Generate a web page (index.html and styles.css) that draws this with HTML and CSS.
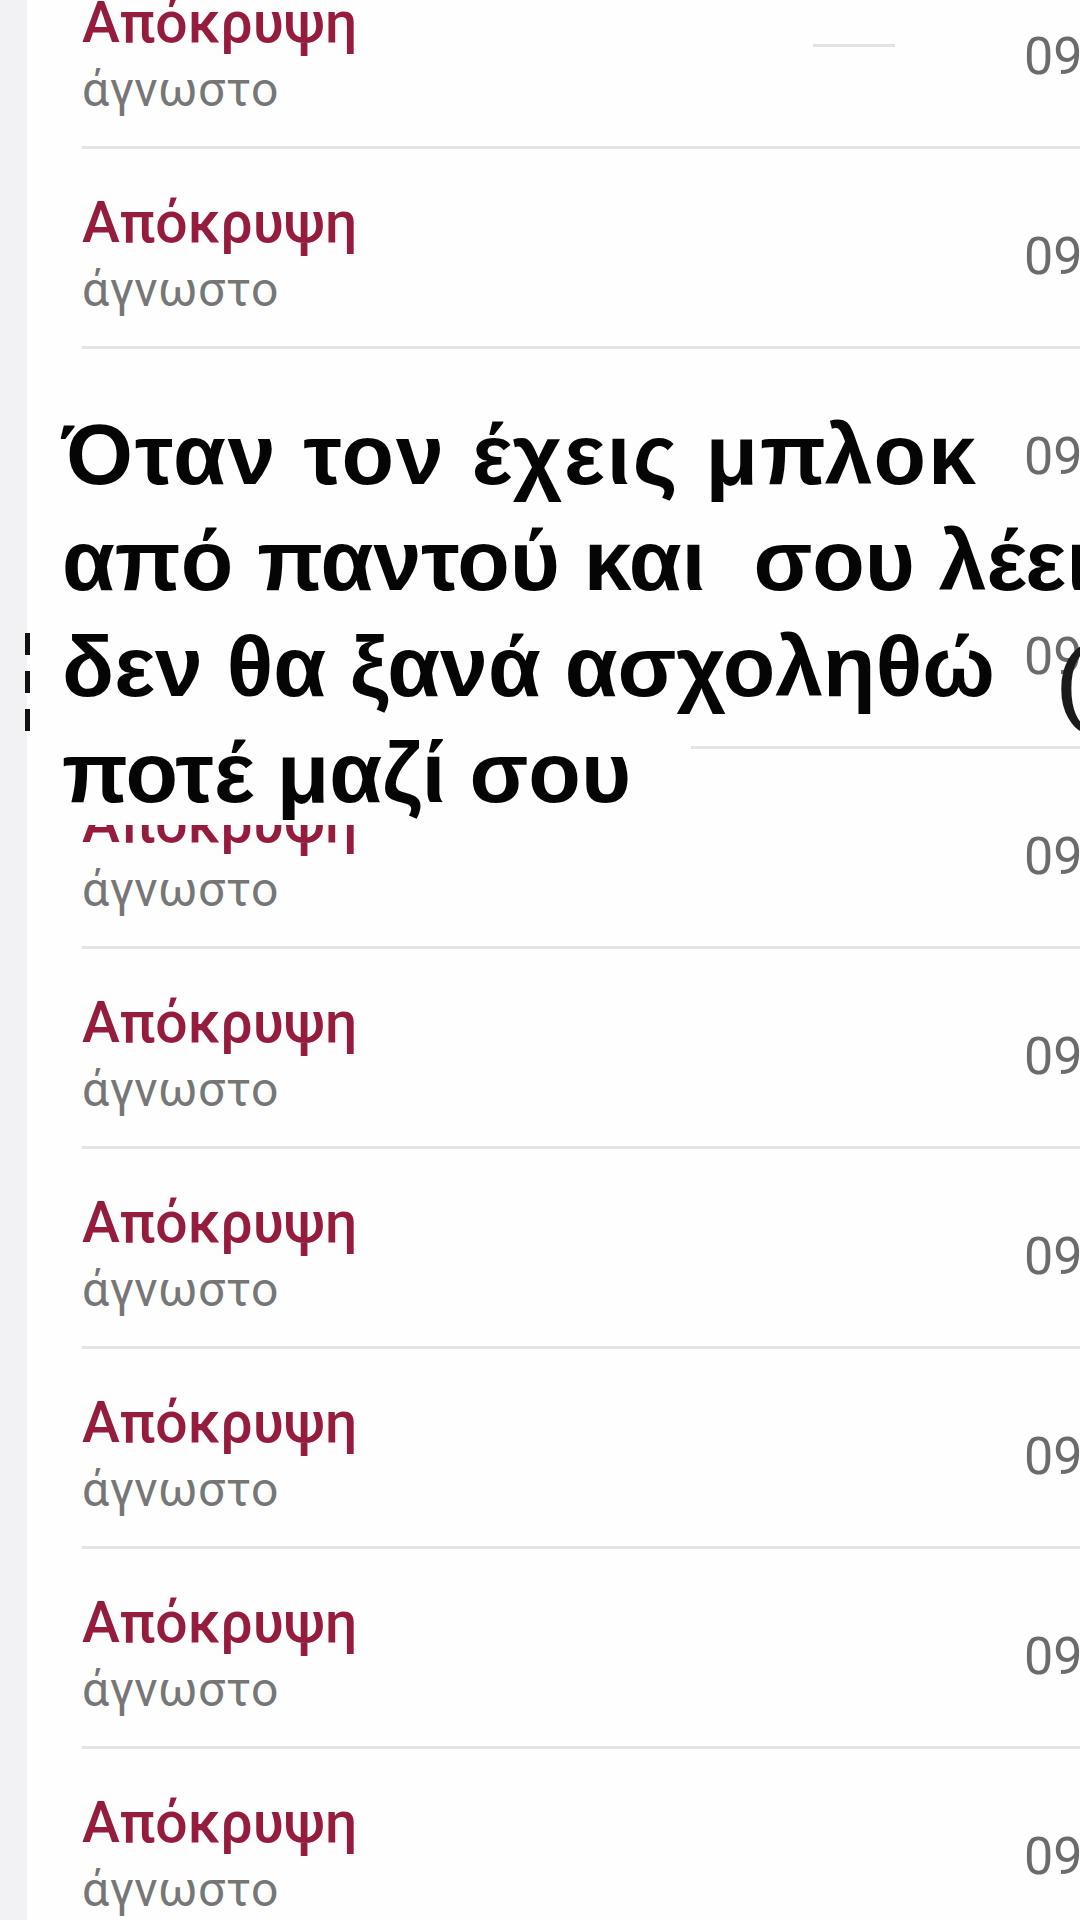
FILE: index.html
```html
<!DOCTYPE html>
<html lang="el">
<head>
<meta charset="utf-8">
<title>Αποκλεισμένες κλήσεις</title>
<link rel="stylesheet" href="styles.css">
</head>
<body>
<div class="screen">
  <div class="strip"></div>
  <div class="list">
    <div class="row"><div class="texts"><div class="title">Απόκρυψη</div><div class="sub">άγνωστο</div></div><div class="time">09:41</div><span class="ghost-dash"></span></div>
    <div class="row"><div class="texts"><div class="title">Απόκρυψη</div><div class="sub">άγνωστο</div></div><div class="time">09:41</div></div>
    <div class="row"><div class="texts"><div class="title">Απόκρυψη</div><div class="sub">άγνωστο</div></div><div class="time">09:40</div></div>
    <div class="row"><div class="texts"><div class="title">Απόκρυψη</div><div class="sub">άγνωστο</div></div><div class="time">09:40</div><span class="ghost-paren">(</span></div>
    <div class="row"><div class="texts"><div class="title">Απόκρυψη</div><div class="sub">άγνωστο</div></div><div class="time">09:39</div></div>
    <div class="row"><div class="texts"><div class="title">Απόκρυψη</div><div class="sub">άγνωστο</div></div><div class="time">09:39</div></div>
    <div class="row"><div class="texts"><div class="title">Απόκρυψη</div><div class="sub">άγνωστο</div></div><div class="time">09:38</div></div>
    <div class="row"><div class="texts"><div class="title">Απόκρυψη</div><div class="sub">άγνωστο</div></div><div class="time">09:38</div></div>
    <div class="row"><div class="texts"><div class="title">Απόκρυψη</div><div class="sub">άγνωστο</div></div><div class="time">09:37</div></div>
    <div class="row"><div class="texts"><div class="title">Απόκρυψη</div><div class="sub">άγνωστο</div></div><div class="time">09:37</div></div>
  </div>
  <p class="caption"><span class="line l1">Όταν τον έχεις μπλοκ</span><span class="line l2">από παντού και  σου λέει</span><span class="line l3">δεν θα ξανά ασχοληθώ</span><span class="line l4">ποτέ μαζί σου</span></p>
  <span class="edge-marks"></span>
</div>
</body>
</html>
```

FILE: styles.css
```css
html, body {
  margin: 0;
  padding: 0;
  background: #fefefe;
}

.screen {
  position: relative;
  width: 1080px;
  height: 1920px;
  overflow: hidden;
  display: flex;
  background: #fefefe;
  font-family: Roboto, "Liberation Sans", Arial, sans-serif;
}

.strip {
  flex: 0 0 27px;
  background: #f2f2f4;
}

.list {
  flex: 1;
  min-width: 0;
  margin-top: -51px;
  display: flex;
  flex-direction: column;
}

.row {
  position: relative;
  display: flex;
  height: 200px;
  flex: 0 0 200px;
  box-sizing: border-box;
  margin-left: 55px;
  border-bottom: 3px solid #e4e4e6;
}

.texts {
  flex: 1;
  min-width: 0;
  padding-top: 42px;
  display: flex;
  flex-direction: column;
}

.title {
  font-size: 57px;
  line-height: 64px;
  font-weight: 500;
  color: #961c3d;
}

.sub {
  margin-top: 7px;
  font-size: 48px;
  line-height: 56px;
  font-weight: 400;
  color: #767676;
  letter-spacing: 0.5px;
}

.time {
  flex: 0 0 56px;
  min-width: 0;
  align-self: center;
  margin-top: 20px;
  white-space: nowrap;
  font-size: 52px;
  line-height: 1.17;
  color: #6b6b6b;
}

.ghost-dash {
  position: absolute;
  left: 731px;
  top: 95px;
  width: 82px;
  height: 3px;
  background: #e2e2e4;
}

.ghost-paren {
  position: absolute;
  right: -6px;
  top: 92px;
  font-size: 86px;
  line-height: 1;
  font-weight: 700;
  color: #1a1a1a;
}

.caption {
  position: absolute;
  top: 389px;
  left: 27px;
  margin: 0;
  font-family: "Liberation Sans", Arial, sans-serif;
  font-weight: 700;
  font-size: 86px;
  line-height: 106px;
  color: #050505;
}

.line {
  display: block;
  width: fit-content;
  white-space: pre;
  background: #fefefe;
  padding: 0 18px 0 35px;
}

.l1 {
  padding-top: 12px;
  padding-right: 14px;
  letter-spacing: 2px;
}

.l4 {
  padding-right: 60px;
}

.edge-marks {
  position: absolute;
  left: 25px;
  top: 633px;
  width: 5px;
  height: 100px;
  background: repeating-linear-gradient(to bottom, #111 0 22px, transparent 22px 38px);
}
```
